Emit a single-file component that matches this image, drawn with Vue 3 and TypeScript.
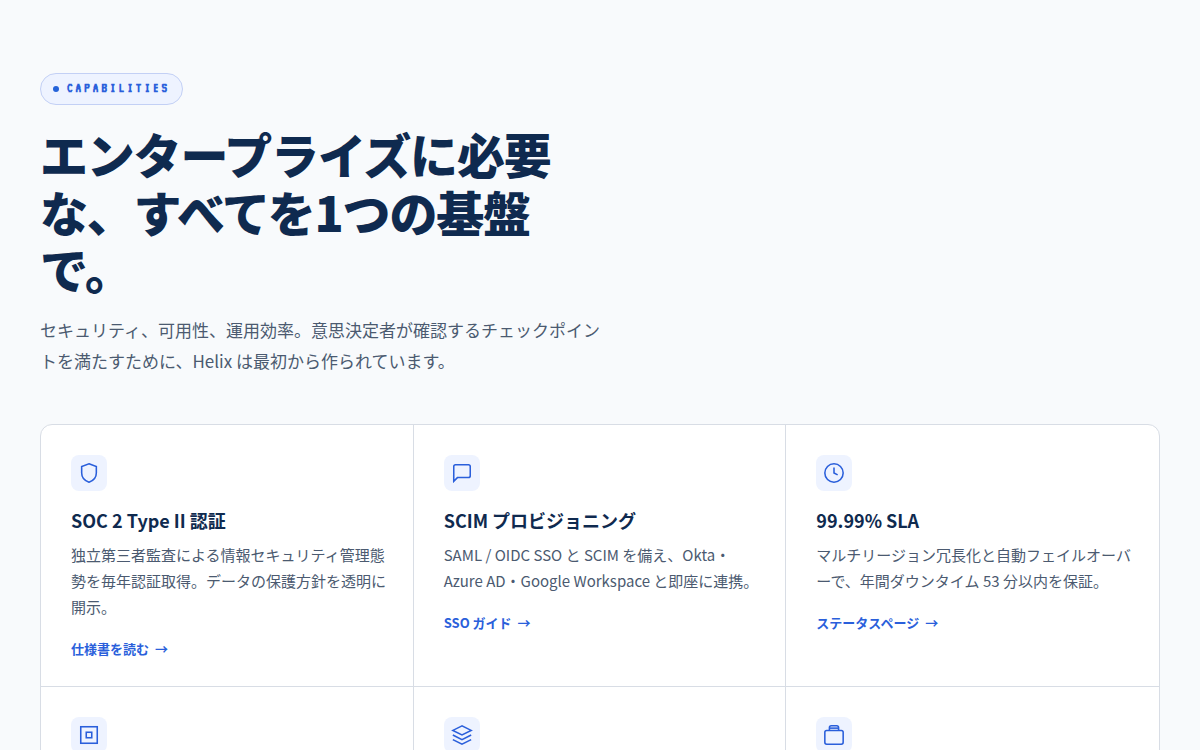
<script setup lang="ts">
interface Shape {
  tag: 'path' | 'rect' | 'circle'
  attrs: Record<string, string>
}

interface Feature {
  id: string
  title?: string
  text?: string
  link?: string
  icon: Shape[]
}

const path = (d: string): Shape => ({ tag: 'path', attrs: { d } })

const features: Feature[] = [
  {
    id: 'shield',
    title: 'SOC 2 Type II 認証',
    text: '独立第三者監査による情報セキュリティ管理態勢を毎年認証取得。データの保護方針を透明に開示。',
    link: '仕様書を読む',
    icon: [path('M12 2l8 3v7c0 5-3.5 8.500-8 10-4.500-1.500-8-5-8-10V5z')],
  },
  {
    id: 'chat',
    title: 'SCIM プロビジョニング',
    text: 'SAML / OIDC SSO と SCIM を備え、Okta・Azure AD・Google Workspace と即座に連携。',
    link: 'SSO ガイド',
    icon: [path('M21 15a2 2 0 0 1-2 2H7l-4 4V5a2 2 0 0 1 2-2h14a2 2 0 0 1 2 2z')],
  },
  {
    id: 'clock',
    title: '99.99% SLA',
    text: 'マルチリージョン冗長化と自動フェイルオーバーで、年間ダウンタイム 53 分以内を保証。',
    link: 'ステータスページ',
    icon: [{ tag: 'circle', attrs: { cx: '12', cy: '12', r: '10' } }, path('M12 6v6l4 2')],
  },
  {
    id: 'chip',
    icon: [
      { tag: 'rect', attrs: { x: '3', y: '3', width: '18', height: '18' } },
      { tag: 'rect', attrs: { x: '9', y: '9', width: '6', height: '6' } },
    ],
  },
  {
    id: 'layers',
    icon: [path('M12 2L2 7l10 5 10-5z'), path('M2 12l10 5 10-5'), path('M2 17l10 5 10-5')],
  },
  {
    id: 'case',
    icon: [
      { tag: 'rect', attrs: { x: '2', y: '7', width: '20', height: '15', rx: '2' } },
      path('M7 7V4a2 2 0 0 1 2-2h6a2 2 0 0 1 2 2v3'),
      path('M7 4.5h10'),
    ],
  },
]
</script>

<template>
  <section class="capabilities" lang="ja">
    <header class="intro">
      <span class="badge"><i class="dot"></i><span class="label">CAPABILITIES</span></span>
      <h2 class="heading">エンタープライズに必要な、すべてを1つの基盤で。</h2>
      <p class="lead">
        セキュリティ、可用性、運用効率。意思決定者が確認するチェックポイントを満たすために、Helix は最初から作られています。
      </p>
    </header>
    <div class="grid">
      <article v-for="f in features" :key="f.id" class="cell">
        <div class="icon">
          <svg viewBox="0 0 24 24" width="22" height="22" aria-hidden="true">
            <component :is="s.tag" v-for="(s, i) in f.icon" :key="i" v-bind="s.attrs" />
          </svg>
        </div>
        <h3 v-if="f.title" class="title">{{ f.title }}</h3>
        <p v-if="f.text" class="text">{{ f.text }}</p>
        <a v-if="f.link" class="link" href="#">{{ f.link }}<span>→</span></a>
      </article>
    </div>
  </section>
</template>

<style>
body {
  background: #f8fafc;
}
</style>

<style scoped>
.capabilities {
  max-width: 1200px;
  margin: 0 auto;
  padding: 73px 40px;
  box-sizing: border-box;
  font-family: 'Noto Sans CJK JP', sans-serif;
  color: #0f2a4f;
}
.intro {
  max-width: 564px;
  margin-bottom: 48px;
}
.badge {
  display: flex;
  width: fit-content;
  align-items: center;
  gap: 8px;
  box-sizing: border-box;
  height: 32px;
  padding: 0 12px;
  border: 1px solid #c3d0f5;
  border-radius: 16px;
  background: #eef3ff;
  color: #2a5fdb;
  font-family: 'VT323', 'Liberation Mono', monospace;
  font-size: 14px;
  font-weight: 700;
  letter-spacing: 3px;
}
.label {
  padding-bottom: 3px;
}
.dot {
  width: 6px;
  height: 6px;
  border-radius: 50%;
  background: #2563d9;
}
.heading {
  max-width: 560px;
  margin: 20px 0 16px;
  font-size: 48px;
  font-weight: 800;
  line-height: 1.2;
  letter-spacing: -0.025em;
}
.lead {
  margin: 0;
  font-size: 17px;
  line-height: 31px;
  color: #4b5a70;
}
.grid {
  display: grid;
  grid-template-columns: repeat(3, 1fr);
  overflow: hidden;
  border: 1px solid #d8dde5;
  border-radius: 12px;
  background: #fff;
}
.cell {
  padding: 30px 24px 28px 30px;
  border-right: 1px solid #d8dde5;
  border-bottom: 1px solid #d8dde5;
}
.cell:nth-child(3n) {
  border-right: 0;
}
.cell:nth-child(n + 4) {
  border-bottom: 0;
}
.icon {
  display: grid;
  place-items: center;
  width: 36px;
  height: 36px;
  border-radius: 8px;
  background: #eef3ff;
}
.icon svg {
  fill: none;
  stroke: #2a5fdb;
  stroke-width: 1.7;
}
.title {
  margin: 16px 0 9px;
  font-size: 18px;
  font-weight: 700;
  line-height: 26px;
}
.text {
  margin: 0 0 20px;
  font-size: 15px;
  line-height: 26px;
  color: #4b5a70;
}
.link {
  display: flex;
  width: fit-content;
  gap: 6px;
  color: #2a5fdb;
  font-size: 13px;
  font-weight: 700;
  line-height: 18px;
  text-decoration: none;
}
</style>
